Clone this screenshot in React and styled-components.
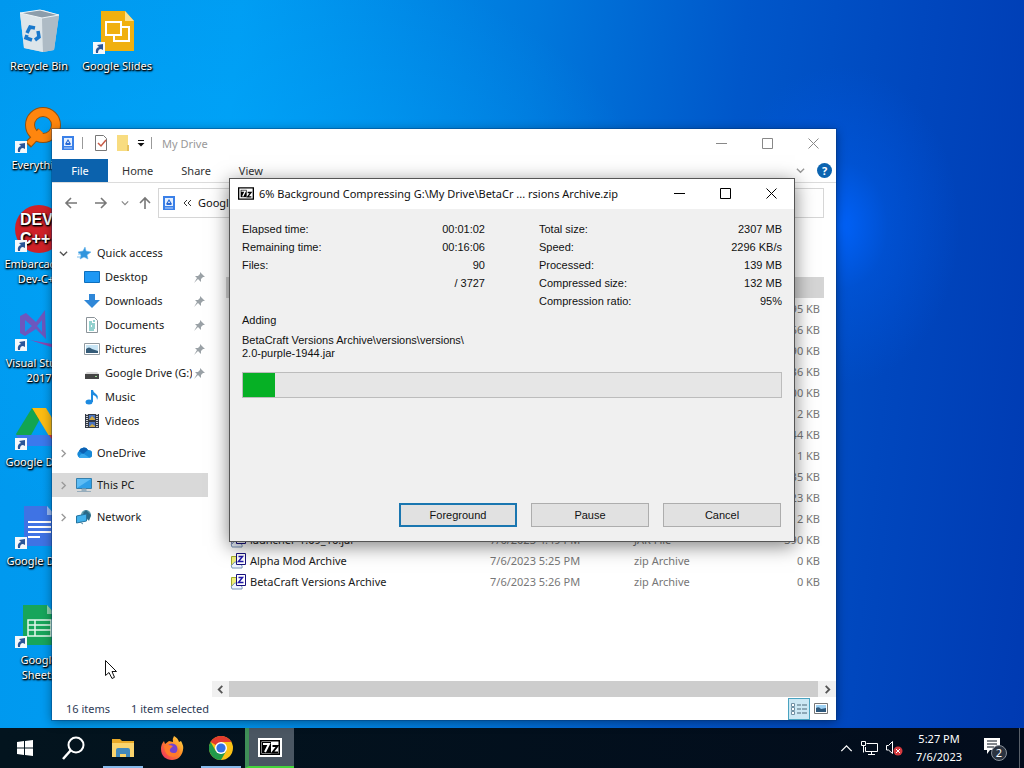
import styled, { createGlobalStyle, css } from "styled-components";

const Global = createGlobalStyle`
  * { box-sizing: border-box; }
  body {
    margin: 0;
    font-family: "Noto Sans", "Open Sans", sans-serif;
    font-size: 11px;
    line-height: 15px;
    color: #111;
  }
  button {
    font: inherit;
    color: inherit;
    border: 0;
    padding: 0;
    background: none;
  }
  a { color: inherit; text-decoration: none; }
  svg { display: block; flex: none; }
`;

// SCREEN
const Screen = styled.div`
  display: flex;
  flex-direction: column;
  height: 100vh;
  overflow: hidden;
`;
const Desktop = styled.main`
  position: relative;
  flex: 1;
  min-height: 0;
  background:
    radial-gradient(ellipse 120px 160px at 82% 31%, rgba(0, 100, 255, 0.9), rgba(0, 92, 235, 0.4) 40%, rgba(0, 80, 210, 0) 100%),
    radial-gradient(ellipse 420px 300px at 24% 34%, rgba(0, 172, 255, 0.6), rgba(0, 150, 255, 0) 100%),
    linear-gradient(96deg, #0098ee 0%, #009cf2 22%, #0078dc 49%, #0057ca 68%, #0047be 84%, #003ab2 100%);
`;

// DESKTOP ICONS
const Shortcuts = styled.nav`
  display: grid;
  grid-auto-flow: column;
  grid-template-rows: repeat(7, 99px);
  grid-auto-columns: 78px;
  justify-content: start;
`;
const Shortcut = styled.a`
  display: flex;
  flex-direction: column;
  align-items: center;
  padding-top: 7px;
  color: #fff;
  text-align: center;
  white-space: nowrap;
  text-shadow: 1px 1px 2px #000, 0 1px 2px #000, 1px 1px 1px rgba(0, 0, 0, 0.8);
`;
const Picture = styled.span`
  position: relative;
  height: 51px;
`;
const LinkBadge = styled.svg`
  position: absolute;
  left: 0;
  bottom: 4px;
`;
const Line = styled.span`
  display: block;
`;

// EXPLORER WINDOW
const Explorer = styled.section`
  position: absolute;
  inset: 129px 188px 8px 52px;
  display: flex;
  flex-direction: column;
  background: #fff;
  box-shadow: 0 0 0 1px rgba(0, 50, 110, 0.35), 0 2px 10px rgba(0, 0, 0, 0.4);
`;
const TitleBar = styled.header`
  display: flex;
  align-items: center;
  gap: 6px;
  height: 30px;
  padding: 0 0 2px 8px;
  color: #999;
`;
const Divider = styled.span`
  width: 1px;
  height: 12px;
  margin-right: 4px;
  background: #999;
`;
const Controls = styled.div`
  display: flex;
  align-self: stretch;
  margin-left: auto;
`;
const Control = styled.button`
  display: flex;
  width: 46px;
  align-items: center;
  justify-content: center;
`;
const Ribbon = styled.div`
  display: flex;
  align-items: center;
  height: 24px;
  border-bottom: 1px solid #dcdcdc;
`;
const Tab = styled.button`
  height: 23px;
  padding: 0 14px;
  color: #333;
  ${(p) => p.$file && css`
    padding: 0;
    width: 56px;
    background: #0b62ad;
    color: #fff;
  `}
`;
const Help = styled.button`
  width: 15px;
  height: 15px;
  margin: 0 4px 0 12px;
  border-radius: 50%;
  background: #0c64b0;
  color: #fff;
  font-weight: bold;
`;
const RibbonEnd = styled.div`
  display: flex;
  align-items: center;
  margin-left: auto;
`;
const AddressRow = styled.div`
  display: flex;
  align-items: center;
  height: 39px;
  padding: 0 12px 0 7px;
`;
const NavButton = styled.button`
  display: flex;
  justify-content: center;
  width: ${(p) => p.$width}px;
`;
const Address = styled.div`
  display: flex;
  flex: 1;
  align-items: center;
  gap: 6px;
  height: 30px;
  padding-left: 2px;
  border: 1px solid #d6d6d6;
`;
const Panes = styled.div`
  display: flex;
  flex: 1;
  min-height: 0;
`;
const Tree = styled.nav`
  width: 160px;
  padding: 19px 4px 0 0;
`;
const Group = styled.div`
  margin-bottom: 8px;
`;
const TreeItem = styled.a`
  display: flex;
  align-items: center;
  height: 24px;
  padding-left: ${(p) => (p.$child ? 32 : 0)}px;
  background: ${(p) => (p.$selected ? "#d9d9d9" : "transparent")};
  color: #1a1a1a;
`;
const Twist = styled.span`
  display: flex;
  justify-content: center;
  width: 22px;
  margin-right: 2px;
`;
const TreeLabel = styled.span`
  flex: 1;
  margin-left: 5px;
  padding-bottom: 2px;
  overflow: hidden;
  white-space: nowrap;
`;
const Pin = styled.svg`
  margin: 0 3px 0 2px;
`;
const ListPane = styled.div`
  display: flex;
  flex: 1;
  flex-direction: column;
  min-width: 0;
`;
const ListArea = styled.div`
  flex: 1;
  padding: 0 12px 0 14px;
  overflow: hidden;
`;
const Files = styled.table`
  width: 100%;
  table-layout: fixed;
  border-collapse: collapse;
  color: #777;
  th {
    height: 34px;
    padding: 0;
  }
  td {
    height: 21px;
    padding: 0;
    white-space: nowrap;
  }
  td:last-child {
    padding-right: 4px;
    text-align: right;
  }
`;
const FileRow = styled.tr`
  background: ${(p) => (p.$selected ? "#d5d5d5" : "transparent")};
`;
const FileName = styled.span`
  display: flex;
  align-items: center;
  gap: 4px;
  padding-left: 4px;
  color: #1a1a1a;
`;
const ScrollBar = styled.div`
  display: flex;
  height: 16px;
  background: #f0f0f0;
`;
const ScrollArrow = styled.button`
  display: flex;
  align-items: center;
  justify-content: center;
  width: 17px;
`;
const Thumb = styled.div`
  flex: 1;
  margin-right: 1px;
  background: #cdcdcd;
`;
const Status = styled.footer`
  display: flex;
  align-items: center;
  gap: 21px;
  height: 23px;
  padding: 0 4px 0 14px;
  color: #2d3a56;
`;
const Views = styled.div`
  display: flex;
  margin-left: auto;
`;
const ViewButton = styled.button`
  display: flex;
  align-items: center;
  justify-content: center;
  width: 22px;
  height: 22px;
  border: 1px solid ${(p) => (p.$on ? "#4aa3c0" : "transparent")};
  background: ${(p) => (p.$on ? "#cce8f4" : "transparent")};
`;

// PROGRESS DIALOG
const Dialog = styled.section`
  position: absolute;
  left: 229px;
  top: 178px;
  width: 566px;
  border: 1px solid #555;
  background: #f0f0f0;
  box-shadow: 0 4px 18px rgba(0, 0, 0, 0.5);
`;
const DialogTitle = styled(TitleBar)`
  gap: 5px;
  background: #fff;
  color: #111;
`;
const DialogBody = styled.div`
  padding: 11px 12px 14px;
  font-family: "Liberation Sans", Arial, sans-serif;
  line-height: 13px;
`;
const Stats = styled.div`
  display: grid;
  grid-template-columns: 1fr 1fr;
  gap: 54px;
`;
const StatList = styled.dl`
  margin: 0;
`;
const Stat = styled.div`
  display: flex;
  justify-content: space-between;
  line-height: 18px;
  dd { margin: 0; }
`;
const Action = styled.p`
  margin: 2px 0 6px;
  line-height: 16px;
`;
const Path = styled.p`
  margin: 0 0 12px;
`;
const Bar = styled.progress`
  display: block;
  width: 100%;
  height: 26px;
  appearance: none;
  border: 1px solid #bcbcbc;
  background: #e6e6e6;
  &::-webkit-progress-bar { background: #e6e6e6; }
  &::-webkit-progress-value { background: #06b025; }
`;
const Actions = styled.div`
  display: flex;
  justify-content: flex-end;
  gap: 14px;
  margin-top: 105px;
  padding-right: 1px;
`;
const Push = styled.button`
  width: 118px;
  height: 24px;
  border: ${(p) => (p.$default ? "2px solid #1a76b0" : "1px solid #adadad")};
  background: #e1e1e1;
`;

// TASKBAR
const TaskBar = styled.footer`
  display: flex;
  height: 40px;
  background: linear-gradient(90deg, #03141e, #020c1c);
  color: #fff;
`;
const Task = styled.button`
  display: flex;
  align-items: center;
  justify-content: center;
  width: 49px;
  ${(p) => p.$open && css`
    background: linear-gradient(#86b9ea, #86b9ea) center bottom / 40px 2px no-repeat;
  `}
  ${(p) => p.$active && css`
    border-bottom: 2px solid #45d53b;
    border-left: 4px solid #3f8f58;
    padding-right: 4px;
    background: #4a5662;
  `}
`;
const Tray = styled.div`
  display: flex;
  align-items: center;
  gap: 8px;
  margin-left: auto;
`;
const Clock = styled.time`
  margin: 0 13px 0 5px;
  line-height: 18px;
  text-align: center;
`;
const Notices = styled.button`
  margin-right: 3px;
`;
const ShowDesktop = styled.button`
  align-self: stretch;
  width: 5px;
  border-left: 1px solid #596069;
`;

const Pointer = styled.svg`
  position: absolute;
  left: 104px;
  top: 659px;
`;

// ICONS
const shortcutArt = {
  bin: (
    <g>
      <path d="M5 6 28 3 44 8 39 43 28 45 9 41Z" fill="#c9d3da" />
      <path d="M5 6 27 11 28 45 9 41Z" fill="#dce5ea" />
      <path d="M27 11 44 8 39 43 28 45Z" fill="#aebbc5" />
      <path d="M5 6 25 3 44 8 27 11Z" fill="#8c9dab" stroke="#eef4f7" strokeWidth="1" />
      <g fill="none" stroke="#1878cc" strokeWidth="3.5">
        <path d="M12 26 15 20 20 21" />
        <path d="M23 24 24 30 20 33" />
        <path d="M17 33 11 31 12 28" />
      </g>
    </g>
  ),
  search: (
    <g>
      <path d="m13 39 13-14" stroke="#94500c" strokeWidth="8" />
      <circle cx="28" cy="19" r="13" fill="none" stroke="#94500c" strokeWidth="10" />
      <path d="m14 38 12-13" stroke="#ff860e" strokeWidth="6" />
      <circle cx="28" cy="19" r="13" fill="none" stroke="#ff860e" strokeWidth="8" />
    </g>
  ),
  dev: (
    <g>
      <circle cx="24" cy="24" r="24" fill="#cf2128" />
      <g fill="#fff" fontFamily="Liberation Sans, sans-serif" fontSize="16" fontWeight="bold">
        <text x="5" y="20">DEV</text>
        <text x="5" y="39">C++</text>
      </g>
    </g>
  ),
  visual: (
    <g>
      <path d="M5 12 11 9 21 18 30 6 31 35 21 25 10 32 5 29Z" fill="#6d57bd" />
      <path d="m10 16 7 6-7 6ZM27 16v12l-5-6Z" fill="#1493ec" />
      <path d="m15 36 33 6v5Z" fill="#8a46b0" />
    </g>
  ),
  drive: (
    <g>
      <path d="M17 5h14L15 34l-8 8L1 31Z" fill="#12a551" />
      <path d="M17 5h14l-7 12Z" fill="#0b7f3b" />
      <path d="M17 5h14l17 28H34Z" fill="#fcbc12" />
      <path d="M15 32h33l-8 11H7L1 32Z" fill="#3b79ed" />
      <path d="M34 32h14l-7 10Z" fill="#e8402f" />
    </g>
  ),
  docs: (
    <g>
      <path d="M9 4h23l8 9v31H9Z" fill="#3f73e4" />
      <path d="m32 4 8 9h-8Z" fill="#9bbcf5" />
      <path d="M13 20h23M13 25h23M13 30h23M13 35h12" stroke="#fff" strokeWidth="2" />
    </g>
  ),
  sheets: (
    <g>
      <path d="M8 4h24l8 9v31H8Z" fill="#17a55b" />
      <path d="m32 4 8 9h-8Z" fill="#8ed4af" />
      <path d="M13 19h23v16H13Zm0 5h23m-23 5h23M20 19v16" fill="none" stroke="#e6f7ee" strokeWidth="1.5" />
    </g>
  ),
  slides: (
    <g>
      <path d="M8 4h24l9 10v30H8Z" fill="#f0b010" />
      <path d="m32 4 9 10h-9Z" fill="#fbe08d" />
      <path d="M13 15h15v13H13Z" fill="none" stroke="#fff" strokeWidth="2" />
      <path d="M29 20h7v14H21v-5" fill="none" stroke="#fff" strokeWidth="2" />
    </g>
  ),
};

const treeArt = {
  star: (
    <g>
      <path d="m9 2 1 4 5 1-4 3 1 4-4-2-4 2 1-4-3-3 5-1Z" fill="#3195dd" stroke="#5fb0ea" strokeWidth="0.5" />
      <path d="M2 9h3M1 12h3" stroke="#7fc0ee" />
    </g>
  ),
  desktop: <path d="M0.500 2.500h15v11H0.500Z" fill="#1e98f4" stroke="#0d6fbd" />,
  downloads: <path d="M5 1h6v6h5L8 15 0 7h5Z" fill="#2f87d8" />,
  documents: (
    <g fill="none">
      <path d="M2.500 0.500h8l3 3v12h-11Z" fill="#fff" stroke="#8b9399" />
      <path d="M5 5h3M9 4h2M5 7h6M5 9h2M8 9h3M5 11h6M5 13h5" stroke="#26a39d" />
    </g>
  ),
  pictures: (
    <g>
      <path d="M0.500 2.500h15v11H0.500Z" fill="#fff" stroke="#929ba1" />
      <path d="M2 4h12v8H2Z" fill="#c8e5f5" />
      <path d="M2 8q3-3 6 0l6 2v2H2Z" fill="#345b78" />
    </g>
  ),
  disk: (
    <g>
      <path d="m1 9 2-2h10l2 2Z" fill="#d8d8d8" />
      <path d="M1 9h14v5H1Z" fill="#454545" />
      <path d="M11 11h2v1h-2Z" fill="#9ddc91" />
    </g>
  ),
  music: (
    <g fill="#1d8ae0">
      <ellipse cx="5" cy="13" rx="3.500" ry="2.500" />
      <path d="M7 1h2q0 2 3 4t1 6q0-4-4-5v7H7Z" />
    </g>
  ),
  videos: (
    <g>
      <path d="M1 1h14v14H1Z" fill="#343a45" />
      <path d="M5 2h6v5H5ZM5 9h6v5H5Z" fill="#4b74bd" />
      <path d="m5 7 3-4 3 3v1ZM5 14l3-3 3 2v1Z" fill="#d1a942" />
      <path d="M3 1v14M13 1v14" stroke="#fff" strokeWidth="1.500" strokeDasharray="1 1" />
    </g>
  ),
  cloud: (
    <g>
      <path d="M4 13a4 4 0 0 1-1-7 5 5 0 0 1 9-1 4 4 0 0 1 1 8Z" fill="#1689d8" />
      <path d="M3 6a5 5 0 0 1 9-1l-5 4Z" fill="#0b61b3" />
      <path d="M3 13q1-5 5-4l6 4Z" fill="#36a8ed" />
    </g>
  ),
  pc: (
    <g>
      <path d="M0.500 1.500h15v10H0.500Z" fill="#5ebcf4" stroke="#347fac" />
      <path d="M1 11 15 2v9Z" fill="#2f9fe8" />
      <path d="M6 12h4v2H6ZM1 14.500h14" fill="#9bb4c4" stroke="#96acbb" />
    </g>
  ),
  network: (
    <g>
      <circle cx="10" cy="6" r="5" fill="#5f9dad" />
      <path d="m7 4 3-3 5 5-2 6Z" fill="#2b6985" />
      <path d="m0.500 7 10-2v7l-10 2Z" fill="#42b2ec" stroke="#23739f" />
      <path d="m4 13 3 2" stroke="#5688a2" />
    </g>
  ),
};

const TreeIcon = ({ name }) => (
  <svg width="16" height="16" viewBox="0 0 16 16" aria-hidden="true">{treeArt[name]}</svg>
);

const DriveIcon = () => (
  <svg width="16" height="16" viewBox="0 0 16 16" aria-hidden="true">
    <path d="M2 1h12v14H2Z" fill="#3a80e8" />
    <path d="M4 3h8v8H4Z" fill="#e5f0ff" />
    <path d="m8 4 3 5-1 1H6L5 9Z" fill="#2869d5" />
    <path d="m8 6 1 2H7Z" fill="#fff" />
    <path d="M4 13h8" stroke="#b9d3fb" />
  </svg>
);

const SevenZip = ({ width = 16, height = 13, inverse }) => (
  <svg width={width} height={height} viewBox="0 0 24 19" aria-hidden="true">
    <path d="M1 1h22v17H1Z" fill={inverse ? "#000" : "#fff"} stroke={inverse ? "#fff" : "#000"} strokeWidth="2" />
    {inverse && <path d="M3 3h18v13H3Z" fill="#fff" stroke="#000" strokeWidth="1" />}
    <path d="M4 4h9v11H4Z" fill="#000" />
    <path d="M5 6h6L7 14" fill="none" stroke="#fff" strokeWidth="2" />
    <path d="M14.500 8h5l-5 6.500h5.500" fill="none" stroke="#000" strokeWidth="2" />
  </svg>
);

const ArchiveIcon = ({ jar }) => (
  <svg width="16" height="16" viewBox="0 0 16 16" aria-hidden="true">
    <path d="M1.500 3.500h7v10h-7Z" fill={jar ? "#d6d8f0" : "#f1f07a"} stroke={jar ? "#8287b5" : "#a0a82c"} />
    <path d="M2 15q-2-3 1-4 2-4 5 0 5 0 4 4Z" fill="#eef5ff" stroke="#7893b8" />
    <path d="M6.500 0.500h9v11h-9Z" fill="#fff" stroke="#17107c" />
    <path d="M8.500 3.500h4l-4 5h5" fill="none" stroke="#2018a8" strokeWidth="1.500" />
  </svg>
);

const PinIcon = () => (
  <Pin width="11" height="11" viewBox="0 0 11 11" aria-hidden="true">
    <path d="m6 0 5 5-2 0-2 2v3L4 7 0 11 3 6 1 4h3l2-2Z" fill="#9aa1a6" />
  </Pin>
);

const Chevron = ({ dir, color = "#555", size = 9, weight = 1.5 }) => {
  const paths = { right: "M3 1 7 5 3 9", left: "M7 1 3 5 7 9", down: "M1 3 5 7 9 3", up: "M1 7 5 3 9 7" };
  return (
    <svg width={size} height={size} viewBox="0 0 10 10" aria-hidden="true">
      <path d={paths[dir]} fill="none" stroke={color} strokeWidth={weight} />
    </svg>
  );
};

const Arrow = ({ d }) => (
  <svg width="14" height="14" viewBox="0 0 14 14" aria-hidden="true">
    <path d={d} fill="none" stroke="#777" strokeWidth="1.600" />
  </svg>
);

const WindowControls = ({ color }) => (
  <Controls>
    {[
      ["Minimize", "M0 5.500h11"],
      ["Maximize", "M0.500 0.500h10v10H0.500Z"],
      ["Close", "m0.500 0.500 10 10m0-10-10 10"],
    ].map(([label, d]) => (
      <Control key={label} aria-label={label}>
        <svg width="11" height="11" viewBox="0 0 11 11">
          <path d={d} fill="none" stroke={color} />
        </svg>
      </Control>
    ))}
  </Controls>
);

// DATA
const shortcuts = [
  { icon: "bin", lines: ["Recycle Bin"] },
  { icon: "search", lines: ["Everything"], link: true },
  { icon: "dev", lines: ["Embarcadero", "Dev-C++"], link: true },
  { icon: "visual", lines: ["Visual Studio", "2017"], link: true },
  { icon: "drive", lines: ["Google Drive"], link: true },
  { icon: "docs", lines: ["Google Docs"], link: true },
  { icon: "sheets", lines: ["Google", "Sheets"], link: true },
  { icon: "slides", lines: ["Google Slides"], link: true },
];

const quickAccess = [
  { icon: "desktop", label: "Desktop", pinned: true },
  { icon: "downloads", label: "Downloads", pinned: true },
  { icon: "documents", label: "Documents", pinned: true },
  { icon: "pictures", label: "Pictures", pinned: true },
  { icon: "disk", label: "Google Drive (G:)", pinned: true },
  { icon: "music", label: "Music" },
  { icon: "videos", label: "Videos" },
];

const places = [
  { icon: "cloud", label: "OneDrive" },
  { icon: "pc", label: "This PC", selected: true },
  { icon: "network", label: "Network" },
];

const columns = [
  { label: "Name", width: 264 },
  { label: "Date modified", width: 144 },
  { label: "Type", width: 90 },
  { label: "Size" },
];

const files = [
  {},
  { selected: true },
  { size: "95 KB" },
  { size: "66 KB" },
  { size: "90 KB" },
  { size: "36 KB" },
  { size: "00 KB" },
  { size: "12 KB" },
  { size: "44 KB" },
  { size: "1 KB" },
  { size: "35 KB" },
  { size: "23 KB" },
  { size: "12 KB" },
  { name: "launcher-1.09_16.jar", date: "7/6/2023 4:49 PM", type: "JAR File", size: "390 KB", jar: true },
  { name: "Alpha Mod Archive", date: "7/6/2023 5:25 PM", type: "zip Archive", size: "0 KB" },
  { name: "BetaCraft Versions Archive", date: "7/6/2023 5:26 PM", type: "zip Archive", size: "0 KB" },
];

const timeStats = [
  ["Elapsed time:", "00:01:02"],
  ["Remaining time:", "00:16:06"],
  ["Files:", "90"],
  ["", "/ 3727"],
];

const sizeStats = [
  ["Total size:", "2307 MB"],
  ["Speed:", "2296 KB/s"],
  ["Processed:", "139 MB"],
  ["Compressed size:", "132 MB"],
  ["Compression ratio:", "95%"],
];

const StatColumn = ({ rows }) => (
  <StatList>
    {rows.map(([label, value]) => (
      <Stat key={value}>
        <dt>{label}</dt>
        <dd>{value}</dd>
      </Stat>
    ))}
  </StatList>
);

const DesktopIcons = () => (
  <Shortcuts>
    {shortcuts.map((item) => (
      <Shortcut key={item.icon} href="#">
        <Picture>
          <svg width="48" height="48" viewBox="0 0 48 48" aria-hidden="true">{shortcutArt[item.icon]}</svg>
          {item.link && (
            <LinkBadge width="12" height="12" viewBox="0 0 12 12">
              <path d="M0 0h12v12H0Z" fill="#f4f8fb" />
              <path d="M3 11q-1-5 3-6L4 3l6-1v6L8 7Q5 7 5 11Z" fill="#2a5598" />
            </LinkBadge>
          )}
        </Picture>
        {item.lines.map((line) => (
          <Line key={line}>{line}</Line>
        ))}
      </Shortcut>
    ))}
  </Shortcuts>
);

const ExplorerWindow = () => (
  <Explorer>
    <TitleBar>
      <DriveIcon />
      <Divider />
      <svg width="16" height="16" viewBox="0 0 16 16" aria-hidden="true">
        <path d="M2.500 0.500h8l3 3v12h-11Z" fill="#fff" stroke="#777" />
        <path d="m5 8 3 3 5-6" fill="none" stroke="#c85b46" strokeWidth="1.500" />
      </svg>
      <svg width="16" height="16" viewBox="0 0 16 16" aria-hidden="true">
        <path d="M2 0h11v10l1 1v5H2Z" fill="#f8dc80" />
        <path d="M12 10h2v6h-2Z" fill="#e5c15d" />
      </svg>
      <svg width="8" height="8" viewBox="0 0 8 8" aria-hidden="true">
        <path d="M1 1h6v1H1ZM0.500 4h7L4 7.500Z" fill="#111" />
      </svg>
      <Divider />
      <span>My Drive</span>
      <WindowControls color="#888" />
    </TitleBar>
    <Ribbon>
      <Tab $file>File</Tab>
      <Tab>Home</Tab>
      <Tab>Share</Tab>
      <Tab>View</Tab>
      <RibbonEnd>
        <Chevron dir="down" color="#999" />
        <Help aria-label="Help">?</Help>
      </RibbonEnd>
    </Ribbon>
    <AddressRow>
      <NavButton $width={24} aria-label="Back"><Arrow d="M13 7H2m5-5L2 7l5 5" /></NavButton>
      <NavButton $width={36} aria-label="Forward"><Arrow d="M1 7h11M7 2l5 5-5 5" /></NavButton>
      <NavButton $width={12} aria-label="Recent locations"><Chevron dir="down" color="#888" size={8} /></NavButton>
      <NavButton $width={27} aria-label="Up"><Arrow d="M7 13V2M2 7l5-5 5 5" /></NavButton>
      <Address>
        <DriveIcon />
        <svg width="9" height="8" viewBox="0 0 9 8" aria-hidden="true">
          <path d="M4 1 1 4l3 3m4-6L5 4l3 3" fill="none" stroke="#333" />
        </svg>
        <span>Google Drive (G:)</span>
      </Address>
    </AddressRow>
    <Panes>
      <Tree>
        <Group>
          <TreeItem href="#">
            <Twist><Chevron dir="down" /></Twist>
            <TreeIcon name="star" />
            <TreeLabel>Quick access</TreeLabel>
          </TreeItem>
          {quickAccess.map((item) => (
            <TreeItem key={item.label} href="#" $child>
              <TreeIcon name={item.icon} />
              <TreeLabel>{item.label}</TreeLabel>
              {item.pinned && <PinIcon />}
            </TreeItem>
          ))}
        </Group>
        {places.map((item) => (
          <Group key={item.label}>
            <TreeItem href="#" $selected={item.selected}>
              <Twist><Chevron dir="right" color="#999" /></Twist>
              <TreeIcon name={item.icon} />
              <TreeLabel>{item.label}</TreeLabel>
            </TreeItem>
          </Group>
        ))}
      </Tree>
      <ListPane>
        <ListArea>
          <Files>
            <colgroup>
              {columns.map((col) => (
                <col key={col.label} width={col.width} />
              ))}
            </colgroup>
            <thead>
              <tr>
                {columns.map((col) => (
                  <th key={col.label} scope="col" aria-label={col.label} />
                ))}
              </tr>
            </thead>
            <tbody>
              {files.map((file, i) => (
                <FileRow key={i} $selected={file.selected}>
                  <td>
                    {file.name && <FileName><ArchiveIcon jar={file.jar} />{file.name}</FileName>}
                  </td>
                  <td>{file.date}</td>
                  <td>{file.type}</td>
                  <td>{file.size}</td>
                </FileRow>
              ))}
            </tbody>
          </Files>
        </ListArea>
        <ScrollBar>
          <ScrollArrow aria-label="Scroll left"><Chevron dir="left" weight={2} /></ScrollArrow>
          <Thumb />
          <ScrollArrow aria-label="Scroll right"><Chevron dir="right" weight={2} /></ScrollArrow>
        </ScrollBar>
      </ListPane>
    </Panes>
    <Status>
      <span>16 items</span>
      <span>1 item selected</span>
      <Views>
        <ViewButton $on aria-label="Details">
          <svg width="16" height="14" viewBox="0 0 16 14">
            <path d="M0.500 1.500h3v3h-3Zm0 4h3v3h-3Zm0 4h3v3h-3Z" fill="#fff" stroke="#7190a3" />
            <path d="M6 3h4m1 0h5M6 7h4m1 0h5M6 11h4m1 0h5" stroke="#4c6878" />
          </svg>
        </ViewButton>
        <ViewButton aria-label="Large icons">
          <svg width="14" height="11" viewBox="0 0 14 11">
            <path d="M0.500 0.500h13v10H0.500Z" fill="#fff" stroke="#777" />
            <path d="M2 2h10v7H2Z" fill="#9ed1f3" />
            <path d="M2 5q3-2 5 1l5-1v4H2Z" fill="#2d577b" />
          </svg>
        </ViewButton>
      </Views>
    </Status>
  </Explorer>
);

const ProgressDialog = () => (
  <Dialog role="dialog" aria-label="Compressing">
    <DialogTitle>
      <SevenZip />
      <span>6% Background Compressing G:\My Drive\BetaCr ... rsions Archive.zip</span>
      <WindowControls color="#000" />
    </DialogTitle>
    <DialogBody>
      <Stats>
        <StatColumn rows={timeStats} />
        <StatColumn rows={sizeStats} />
      </Stats>
      <Action>Adding</Action>
      <Path>
        BetaCraft Versions Archive\versions\versions\
        <br />
        2.0-purple-1944.jar
      </Path>
      <Bar value="6" max="100" aria-label="Progress" />
      <Actions>
        <Push $default>Foreground</Push>
        <Push>Pause</Push>
        <Push>Cancel</Push>
      </Actions>
    </DialogBody>
  </Dialog>
);

const BottomBar = () => (
  <TaskBar>
    <Task aria-label="Start">
      <svg width="16" height="16" viewBox="0 0 16 16" fill="#fff">
        <path d="m0 2 7-1v6.500H0ZM8 1l8-1v7.500H8ZM0 8.500h7V15l-7-1ZM8 8.500h8V16l-8-1Z" />
      </svg>
    </Task>
    <Task aria-label="Search">
      <svg width="24" height="24" viewBox="0 0 24 24" fill="none" stroke="#fff" strokeWidth="2">
        <circle cx="14" cy="9" r="7.500" />
        <path d="m9 14-8 9" strokeWidth="2.500" />
      </svg>
    </Task>
    <Task $open aria-label="File Explorer">
      <svg width="22" height="20" viewBox="0 0 22 20">
        <path d="M0 1h8l2 2h12v16H0Z" fill="#e9a928" />
        <path d="M0 5h22v14H0Z" fill="#fbd46d" />
        <path d="M4 19v-7q0-2 2-2h10q2 0 2 2v7h-4v-3H8v3Z" fill="#4389bd" />
      </svg>
    </Task>
    <Task aria-label="Firefox">
      <svg width="24" height="24" viewBox="0 0 24 24">
        <defs>
          <linearGradient id="fox" x1="1" y1="0" x2="0" y2="1">
            <stop offset="0" stopColor="#ffe34b" />
            <stop offset="0.45" stopColor="#ff8a24" />
            <stop offset="1" stopColor="#ef2568" />
          </linearGradient>
        </defs>
        <path d="M14 0q4 2 5 6l2-1q3 5 2 9c-1 6-5 10-11 10S1 20 1 13q0-5 3-8l1 3 4-3 4 1q-1-3 1-6Z" fill="url(#fox)" />
        <circle cx="12" cy="13" r="5.500" fill="#7543cf" />
        <path d="M4 10q4-2 9 0l-3 3q-1 4 4 4 4 0 5-5 2 8-6 9-8 0-9-11Z" fill="#ff7a2b" />
      </svg>
    </Task>
    <Task $open aria-label="Chrome">
      <svg width="24" height="24" viewBox="0 0 24 24">
        <circle cx="12" cy="12" r="12" fill="#fbc116" />
        <path d="M12 12 1.600 6A12 12 0 0 1 22.400 6H12Z" fill="#e33b2e" />
        <path d="m1.600 6 5.200 9L12 18l0 6A12 12 0 0 1 1.600 6Z" fill="#229a4a" />
        <path d="m12 24 5.200-9-5.200 3Z" fill="#229a4a" />
        <circle cx="12" cy="12" r="6" fill="#fff" />
        <circle cx="12" cy="12" r="4.600" fill="#3472e4" />
      </svg>
    </Task>
    <Task $active aria-label="7-Zip">
      <SevenZip width={24} height={19} inverse />
    </Task>
    <Tray>
      <Chevron dir="up" color="#fff" size={13} weight={1} />
      <svg width="17" height="14" viewBox="0 0 17 14" fill="none" stroke="#fff" aria-hidden="true">
        <path d="M5.500 2.500h11v8H4.500V6M0.500 0.500h4v4h-4Zm2 4v7M7 13.500h7M10.500 11v2" />
      </svg>
      <svg width="17" height="16" viewBox="0 0 17 16" aria-hidden="true">
        <path d="M0.500 5.500h2l4-4v12l-4-3.500h-2Z" fill="none" stroke="#fff" />
        <circle cx="12" cy="11" r="4.500" fill="#d53a3f" />
        <path d="m10 9 4 4m0-4-4 4" stroke="#fff" />
      </svg>
      <Clock>
        5:27 PM
        <br />
        7/6/2023
      </Clock>
      <Notices aria-label="2 notifications">
        <svg width="25" height="26" viewBox="0 0 25 26">
          <path d="M1 3h16v12H7l-3 4v-4H1Z" fill="#fff" />
          <path d="M4 6h10M4 9h10M4 12h7" stroke="#06101d" />
          <circle cx="16" cy="18" r="7.500" fill="#2b3340" stroke="#8a919a" />
          <text x="16" y="22" fill="#fff" fontSize="11" textAnchor="middle">2</text>
        </svg>
      </Notices>
      <ShowDesktop aria-label="Show desktop" />
    </Tray>
  </TaskBar>
);

const App = () => (
  <>
    <Global />
    <Screen>
      <Desktop>
        <DesktopIcons />
        <ExplorerWindow />
        <ProgressDialog />
        <Pointer width="14" height="21" viewBox="0 0 14 21">
          <path d="M1.500 1.500v15l3.500-3 3 6 2.500-1.200L8 12.500h4.500Z" fill="#fff" stroke="#111" />
        </Pointer>
      </Desktop>
      <BottomBar />
    </Screen>
  </>
);

export default App;
